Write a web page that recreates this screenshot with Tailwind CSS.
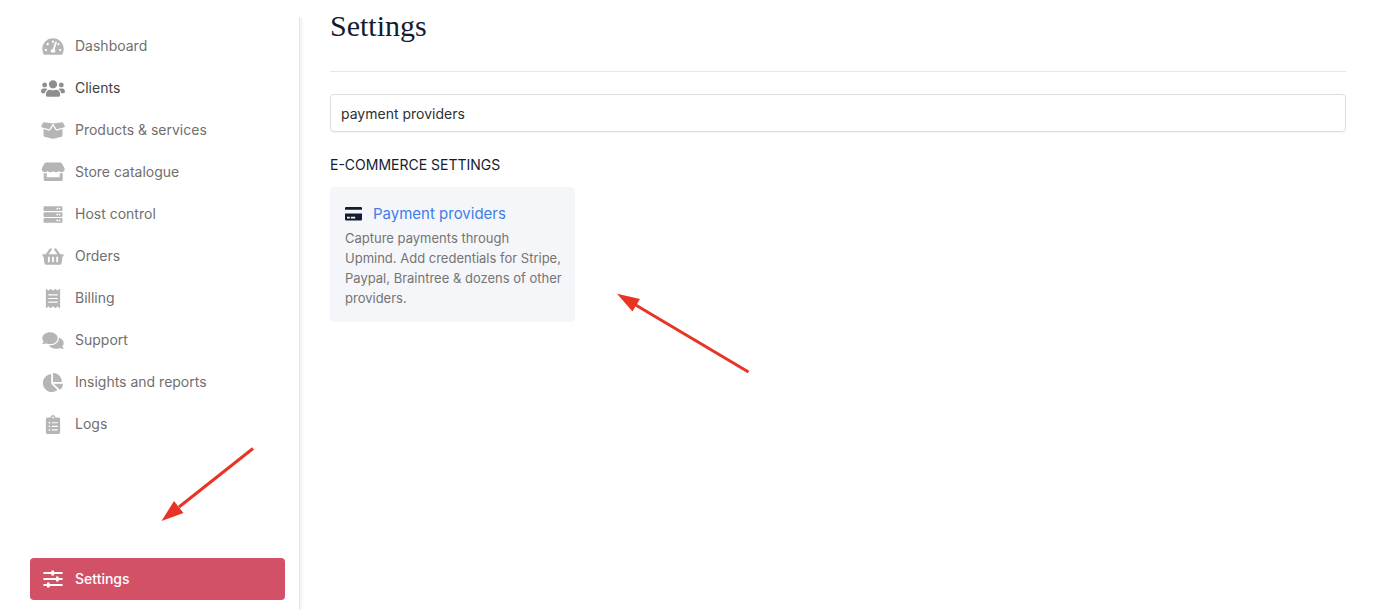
<!DOCTYPE html>
<html lang="en">
  <head>
    <meta charset="UTF-8" />
    <meta name="viewport" content="width=device-width, initial-scale=1.0" />
    <title>Settings</title>
    <script src="https://cdn.jsdelivr.net/npm/@tailwindcss/browser@4"></script>
  </head>
  <body class="relative flex h-screen bg-white pb-1 font-['Inter',sans-serif] text-sm">
    <aside class="mt-[17px] flex w-[300px] shrink-0 flex-col border-r border-gray-200 pt-2 pr-[14px] pb-[10px] pl-[30px] shadow-[0_0_5px_rgba(0,0,0,0.12)] [clip-path:inset(0_-8px_0_0)]">
      <nav class="flex flex-1 flex-col text-[#6f6f6f]">
        <a href="#" class="flex h-[42px] items-center gap-[10px] pl-[11px]">
          <svg class="h-[19px] w-6 fill-[#b5b5b5]" viewBox="0 0 576 512"><path d="M288 32C128.94 32 0 160.94 0 320c0 52.8 14.25 102.26 39.06 144.8 5.61 9.62 16.3 15.2 27.44 15.2h443c11.14 0 21.83-5.58 27.44-15.2C561.75 422.26 576 372.8 576 320c0-159.06-128.94-288-288-288zm0 64c14.71 0 26.58 10.13 30.32 23.65-1.11 2.26-2.64 4.23-3.45 6.67l-9.22 27.67c-5.13 3.49-10.97 6.01-17.64 6.01-17.67 0-32-14.33-32-32S270.33 96 288 96zM96 384c-17.67 0-32-14.33-32-32s14.33-32 32-32 32 14.33 32 32-14.33 32-32 32zm48-160c-17.67 0-32-14.33-32-32s14.33-32 32-32 32 14.33 32 32-14.33 32-32 32zm246.77-72.41l-61.33 184C343.13 347.33 352 364.54 352 384c0 11.72-3.38 22.55-8.88 32H232.88c-5.5-9.45-8.88-20.28-8.88-32 0-33.94 26.5-61.43 59.9-63.59l61.34-184.01c4.17-12.56 17.73-19.45 30.36-15.17 12.57 4.19 19.35 17.79 15.17 30.36zm14.66 57.2l15.52-46.55c3.47-1.29 7.13-2.23 11.05-2.23 17.67 0 32 14.33 32 32s-14.33 32-32 32c-11.38-.01-20.89-6.28-26.57-15.22zM480 384c-17.67 0-32-14.33-32-32s14.33-32 32-32 32 14.33 32 32-14.33 32-32 32z" /></svg>
          Dashboard
        </a>
        <a href="#" class="flex h-[42px] items-center gap-[10px] pl-[11px] text-[#3f3f3f]">
          <svg class="h-[19px] w-6 fill-[#8e8e8e]" viewBox="0 0 640 512"><path d="M96 224c35.3 0 64-28.7 64-64s-28.7-64-64-64-64 28.7-64 64 28.7 64 64 64zm448 0c35.3 0 64-28.7 64-64s-28.7-64-64-64-64 28.7-64 64 28.7 64 64 64zm32 32h-64c-17.6 0-33.5 7.1-45.1 18.6 40.3 22.1 68.9 62 75.1 109.4h66c17.7 0 32-14.3 32-32v-32c0-35.3-28.7-64-64-64zm-256 0c61.9 0 112-50.1 112-112S381.9 32 320 32 208 82.1 208 144s50.1 112 112 112zm76.8 32h-8.3c-20.8 10-43.9 16-68.5 16s-47.6-6-68.5-16h-8.3C179.6 288 128 339.6 128 403.2V432c0 26.5 21.5 48 48 48h288c26.5 0 48-21.5 48-48v-28.8c0-63.6-51.6-115.2-115.2-115.2zm-223.7-13.4C161.5 263.1 145.6 256 128 256H64c-35.3 0-64 28.7-64 64v32c0 17.7 14.3 32 32 32h65.9c6.3-47.4 34.9-87.3 75.2-109.4z" /></svg>
          Clients
        </a>
        <a href="#" class="flex h-[42px] items-center gap-[10px] pl-[11px]">
          <svg class="h-[19px] w-6 fill-[#b5b5b5]" viewBox="0 0 640 512"><path d="M425.7 256c-16.9 0-32.8-9-41.4-23.4L320 126l-64.2 106.6c-8.7 14.5-24.6 23.5-41.5 23.5-4.5 0-9-.6-13.3-1.9L64 215v178c0 14.7 10 27.5 24.2 31l216.2 54.1c10.2 2.5 20.9 2.5 31 0L551.8 424c14.2-3.6 24.2-16.4 24.2-31V215l-137 39.1c-4.3 1.3-8.8 1.9-13.3 1.9zm212.6-112.2L586.8 41c-3.1-6.2-9.8-9.8-16.7-8.9L320 64l91.7 152.1c3.8 6.3 11.4 9.3 18.5 7.3l197.9-56.5c9.9-2.9 14.7-13.9 10.2-23.1zM53.2 41L1.7 143.8c-4.6 9.2.3 20.2 10.1 23l197.9 56.5c7.1 2 14.7-1 18.5-7.3L320 64 69.8 32.1c-6.9-.8-13.5 2.7-16.6 8.9z" /></svg>
          Products &amp; services
        </a>
        <a href="#" class="flex h-[42px] items-center gap-[10px] pl-[11px]">
          <svg class="h-6 w-6 fill-[#b5b5b5]" viewBox="0 0 24 24"><path d="M5 2.4h14.4c.6 0 1 .3 1.3.8l2.6 4.6c1 2-.2 4.2-2.4 4.4-1.2.1-2.3-.4-3-1.2-.7.8-1.7 1.2-2.8 1.2s-2.2-.4-2.9-1.2c-.7.8-1.8 1.2-2.9 1.2s-2.1-.4-2.8-1.2c-.7.8-1.8 1.3-3 1.2C1.300 12 .1 9.800 1.100 7.800l2.600-4.600c.3-.5.7-.8 1.3-.8zM2.700 13c.9.3 2 .3 3 0v4.300h13V13c1 .3 2.100.3 3 0v6.800c0 .7-.6 1.300-1.300 1.300H4c-.7 0-1.300-.6-1.300-1.300z" /></svg>
          Store catalogue
        </a>
        <a href="#" class="flex h-[42px] items-center gap-[10px] pl-[11px]">
          <svg class="h-[19px] w-6 fill-[#b5b5b5]" viewBox="0 0 512 512"><path fill-rule="evenodd" d="M32 32h448a32 32 0 0 1 32 32v64a32 32 0 0 1-32 32H32a32 32 0 0 1-32-32V64a32 32 0 0 1 32-32zm400 40a24 24 0 1 0 0 48 24 24 0 0 0 0-48zm-64 0a24 24 0 1 0 0 48 24 24 0 0 0 0-48zM32 192h448a32 32 0 0 1 32 32v64a32 32 0 0 1-32 32H32a32 32 0 0 1-32-32v-64a32 32 0 0 1 32-32zm400 40a24 24 0 1 0 0 48 24 24 0 0 0 0-48zm-64 0a24 24 0 1 0 0 48 24 24 0 0 0 0-48zM32 352h448a32 32 0 0 1 32 32v64a32 32 0 0 1-32 32H32a32 32 0 0 1-32-32v-64a32 32 0 0 1 32-32zm400 40a24 24 0 1 0 0 48 24 24 0 0 0 0-48zm-64 0a24 24 0 1 0 0 48 24 24 0 0 0 0-48z" /></svg>
          Host control
        </a>
        <a href="#" class="flex h-[42px] items-center gap-[10px] pl-[11px]">
          <svg class="h-[19px] w-6 fill-[#b5b5b5]" viewBox="0 0 576 512"><path d="M576 216v16c0 13.255-10.745 24-24 24h-8l-26.113 182.788C514.509 462.435 494.257 480 470.37 480H105.63c-23.887 0-44.139-17.565-47.518-41.212L32 256h-8c-13.255 0-24-10.745-24-24v-16c0-13.255 10.745-24 24-24h67.341l106.78-146.821c10.395-14.292 30.407-17.453 44.701-7.058 14.293 10.395 17.453 30.408 7.058 44.701L170.477 192h235.046L326.12 82.821c-10.395-14.292-7.234-34.306 7.059-44.701 14.291-10.395 34.306-7.235 44.701 7.058L484.659 192H552c13.255 0 24 10.745 24 24zM312 392V280c0-13.255-10.745-24-24-24s-24 10.745-24 24v112c0 13.255 10.745 24 24 24s24-10.745 24-24zm112 0V280c0-13.255-10.745-24-24-24s-24 10.745-24 24v112c0 13.255 10.745 24 24 24s24-10.745 24-24zm-224 0V280c0-13.255-10.745-24-24-24s-24 10.745-24 24v112c0 13.255 10.745 24 24 24s24-10.745 24-24z" /></svg>
          Orders
        </a>
        <a href="#" class="flex h-[42px] items-center gap-[10px] pl-[11px]">
          <svg class="h-[19px] w-6 fill-[#b5b5b5]" viewBox="0 0 384 512"><path d="M358.4 3.2L320 48 265.6 3.2a15.9 15.9 0 0 0-19.2 0L192 48 137.6 3.2a15.9 15.9 0 0 0-19.2 0L64 48 25.6 3.2C15-4.7 0 2.8 0 16v480c0 13.2 15 20.7 25.6 12.8L64 464l54.4 44.8a15.9 15.9 0 0 0 19.2 0L192 464l54.4 44.8a15.9 15.9 0 0 0 19.2 0L320 464l38.4 44.8c10.5 7.9 25.6.4 25.6-12.8V16c0-13.2-15-20.7-25.6-12.8zM320 360c0 4.4-3.6 8-8 8H72c-4.4 0-8-3.6-8-8v-16c0-4.4 3.6-8 8-8h240c4.4 0 8 3.6 8 8v16zm0-96c0 4.4-3.6 8-8 8H72c-4.4 0-8-3.6-8-8v-16c0-4.4 3.6-8 8-8h240c4.4 0 8 3.6 8 8v16zm0-96c0 4.4-3.6 8-8 8H72c-4.4 0-8-3.6-8-8v-16c0-4.4 3.6-8 8-8h240c4.4 0 8 3.6 8 8v16z" /></svg>
          Billing
        </a>
        <a href="#" class="flex h-[42px] items-center gap-[10px] pl-[11px]">
          <svg class="h-[19px] w-6 fill-[#b5b5b5]" viewBox="0 0 576 512"><path d="M416 192c0-88.4-93.1-160-208-160S0 103.6 0 192c0 34.3 14.1 65.9 38 92-13.4 30.2-35.5 54.2-35.8 54.5-2.2 2.3-2.8 5.7-1.5 8.7S4.8 352 8 352c36.6 0 66.9-12.3 88.7-25 32.2 15.7 70.3 25 111.3 25 114.9 0 208-71.6 208-160zm122 220c23.9-26 38-57.7 38-92 0-66.9-53.5-124.2-129.3-148.1.9 6.6 1.3 13.3 1.3 20.1 0 105.9-107.7 192-240 192-10.8 0-21.3-.8-31.7-1.9C207.8 439.6 281.8 480 368 480c41 0 79.1-9.2 111.3-25 21.8 12.7 52.1 25 88.7 25 3.2 0 6.1-1.9 7.3-4.8 1.3-2.9.7-6.3-1.5-8.7-.3-.3-22.4-24.2-35.8-54.5z" /></svg>
          Support
        </a>
        <a href="#" class="flex h-[42px] items-center gap-[10px] pl-[11px]">
          <svg class="h-[19px] w-6 fill-[#b5b5b5]" viewBox="0 0 544 512"><path d="M527.79 288H290.5l158.03 158.03c6.04 6.04 15.98 6.53 22.19.68 38.7-36.46 65.32-85.61 73.13-140.86 1.34-9.46-6.51-17.85-16.06-17.85zm-15.83-64.8C503.72 103.74 408.26 8.28 288.8.04 279.68-.59 272 7.1 272 16.24V240h223.77c9.14 0 16.82-7.68 16.19-16.8zM224 288V50.71c0-9.55-8.39-17.4-17.84-16.06C86.99 51.49-4.1 155.6.14 280.37 4.5 408.51 114.83 513.59 243.03 511.98c50.4-.63 96.97-16.87 135.26-44.03 7.9-5.6 8.42-17.23 1.57-24.08L224 288z" /></svg>
          Insights and reports
        </a>
        <a href="#" class="flex h-[42px] items-center gap-[10px] pl-[11px]">
          <svg class="h-[19px] w-6 fill-[#b5b5b5]" viewBox="0 0 384 512"><path fill-rule="evenodd" d="M336 64h-80c0-35.3-28.7-64-64-64s-64 28.7-64 64H48C21.5 64 0 85.5 0 112v352c0 26.5 21.5 48 48 48h288c26.5 0 48-21.5 48-48V112c0-26.5-21.5-48-48-48zM192 40a24 24 0 1 1 0 48 24 24 0 0 1 0-48zM96 184a24 24 0 1 1 0 48 24 24 0 0 1 0-48zM96 280a24 24 0 1 1 0 48 24 24 0 0 1 0-48zM96 376a24 24 0 1 1 0 48 24 24 0 0 1 0-48zM160 192h160v32H160zM160 288h160v32H160zM160 384h160v32H160z" /></svg>
          Logs
        </a>
        <a href="#" class="mt-auto flex h-[42px] items-center gap-[10px] rounded bg-[#d25167] pl-[11px] font-medium text-white">
          <svg class="h-6 w-6 fill-white" viewBox="0 0 24 24"><path d="M2.400 4.900h19.200v2H2.400zM2.400 11h19.200v2H2.400zM2.400 17.100h19.200v2H2.400zM10.400 3.400h2.600v5h-2.600zM15 9.500h2.600v5H15zM6 15.600h2.600v5H6z" /></svg>
          Settings
        </a>
      </nav>
    </aside>

    <main class="min-w-0 flex-1 pt-[9px] pr-8 pl-[30px]">
      <h1 class="h-[63px] border-b border-gray-200 font-['Liberation_Serif',serif] text-[30px] leading-[34px] text-[#141c2f]">Settings</h1>
      <input
        type="text"
        aria-label="Search settings"
        value="payment providers"
        class="mt-[22px] block h-[38px] w-full rounded border border-[#dedede] px-[10px] text-sm text-[#303030] shadow-[0_1px_1px_rgba(0,0,0,0.05)] outline-none"
      />
      <h2 class="mt-[23px] leading-5 text-[#141c2f]">E-COMMERCE SETTINGS</h2>
      <div class="mt-3 grid grid-cols-4 gap-3">
        <section class="rounded bg-[#f5f6f9] pt-[15px] pr-2 pb-[14px] pl-[15px]">
          <h3 class="flex items-center gap-[11px] text-[15px] leading-6 text-[#3f7eea]">
            <svg class="h-[14px] w-[17px] fill-[#141c2f]" viewBox="0 0 17 14"><path fill-rule="evenodd" d="M1.200 0h14.600Q17 0 17 1.200V2.800H0V1.200Q0 0 1.200 0zM0 6.500h17v5.800q0 1.200-1.200 1.200H1.200Q0 13.500 0 12.300zM2 9.800v1.600h2.800V9.800zM5.800 9.800v1.600h4.400V9.800z" /></svg>
            <a href="#">Payment providers</a>
          </h3>
          <p class="mt-[2px] text-[13px] leading-5 text-[#747474]">Capture payments through<br />Upmind. Add credentials for Stripe, Paypal, Braintree &amp; dozens of other providers.</p>
        </section>
      </div>
    </main>

    <!-- pointer arrows -->
    <svg class="pointer-events-none absolute top-[447px] left-[161px] h-[75px] w-[94px]" viewBox="0 0 94 75">
      <path d="M92 1.500 18 60" class="stroke-[#e93425] stroke-3" />
      <path d="M.5 74 13 54l9.500 12z" class="fill-[#e93425]" />
    </svg>
    <svg class="pointer-events-none absolute top-[293px] left-[616px] h-[81px] w-[134px]" viewBox="0 0 134 81">
      <path d="M132.500 79 18 11" class="stroke-[#e93425] stroke-3" />
      <path d="M1 .8 24 6l-7.500 12.500z" class="fill-[#e93425]" />
    </svg>
  </body>
</html>
